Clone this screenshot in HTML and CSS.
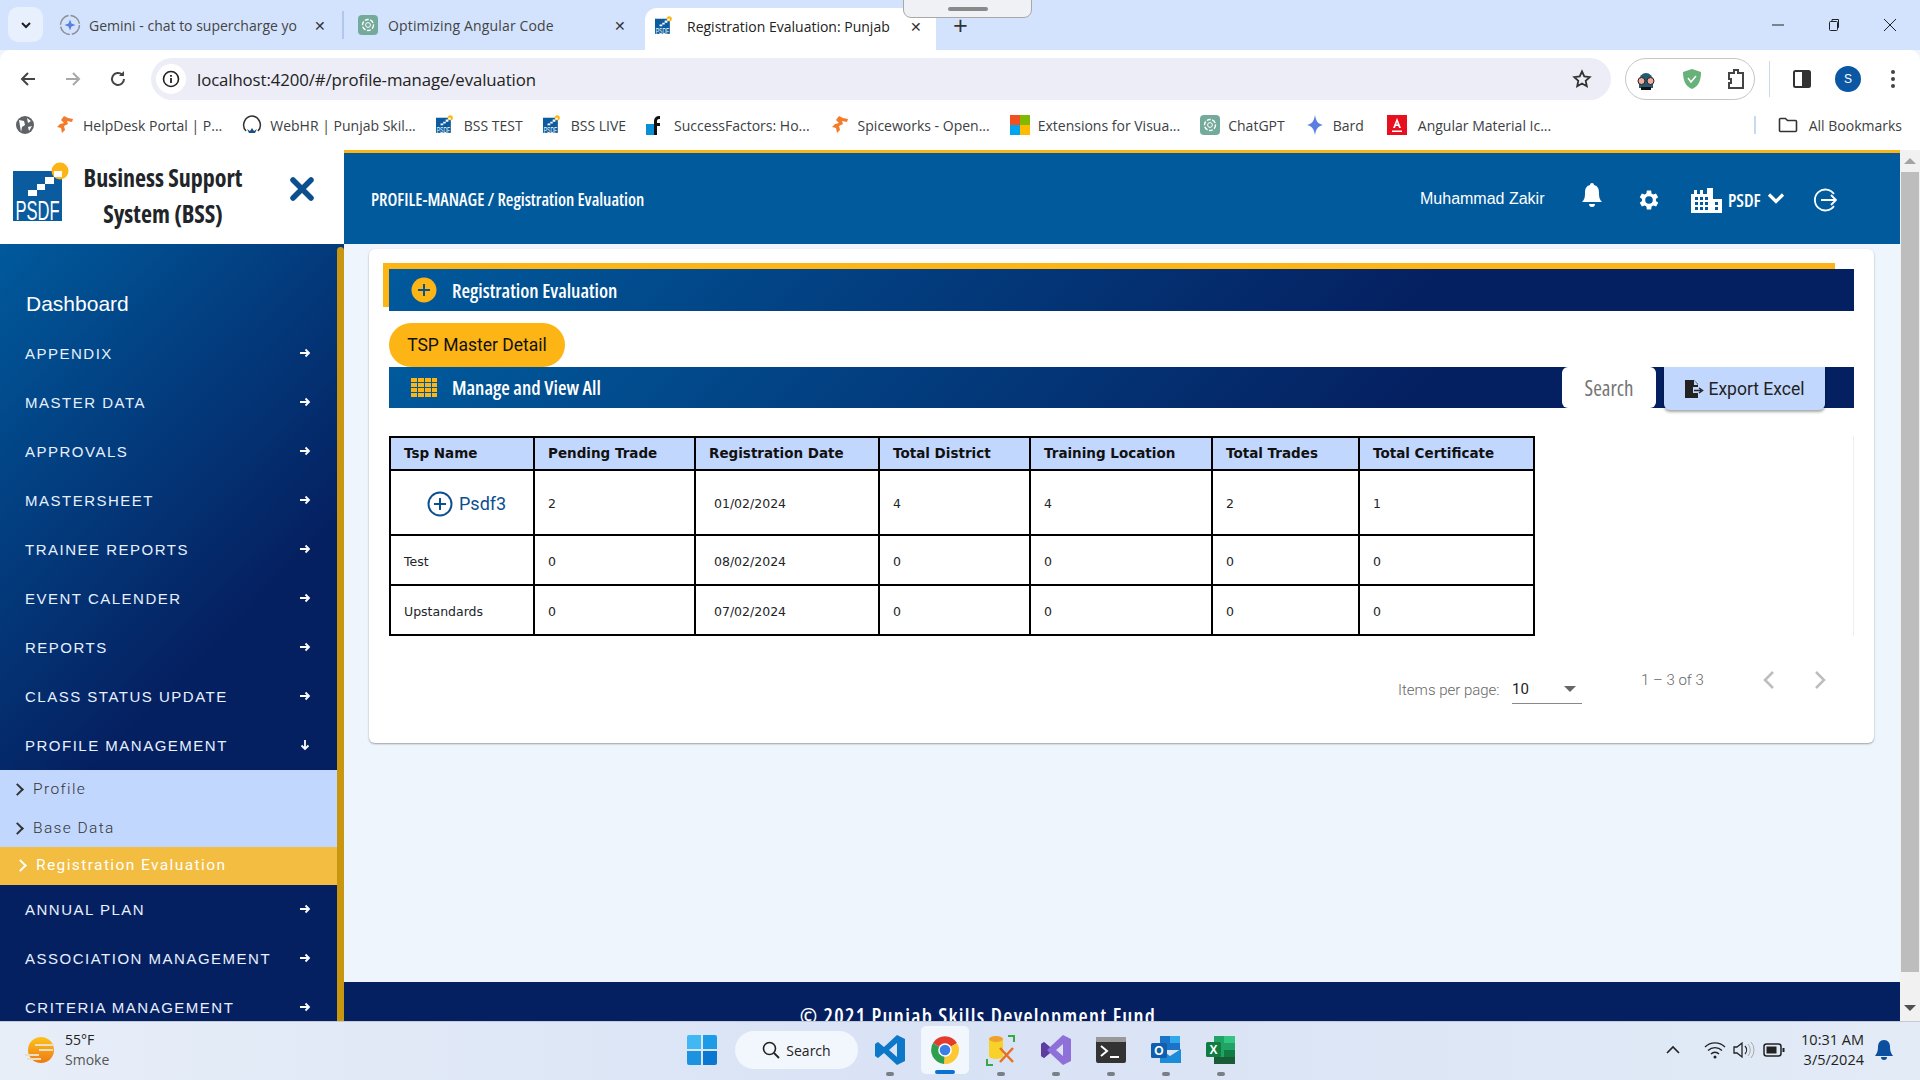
FILE: index.html
```html
<!DOCTYPE html>
<html lang="en">
<head>
    <meta charset="UTF-8">
    <title>Registration Evaluation: Punjab Skills Development Fund</title>
    <link rel="stylesheet" href="styles.css">
</head>
<body>
<svg class="defs" width="0" height="0">
    <symbol id="psdf" viewBox="0 0 66 66">
        <rect x="0" y="9" width="49" height="50" fill="#0b5c9e"/>
        <circle cx="47" cy="9" r="8.500" fill="#fdb515"/>
        <path d="M41 9h8v6h-8zM32 15h9v7h-9zM24 22h8v6h-8zM15 28h9v6h-9z" fill="#fff"/>
        <text x="24.500" y="58" text-anchor="middle" font-family="Liberation Sans, sans-serif" font-size="27" fill="#fff" textLength="44" lengthAdjust="spacingAndGlyphs">PSDF</text>
    </symbol>
    <symbol id="gpt" viewBox="0 0 20 20">
        <rect width="20" height="20" rx="4" fill="#74aa9c"/>
        <circle cx="10" cy="10" r="5.5" fill="none" stroke="#fff" stroke-width="1.4" stroke-dasharray="4 1.5"/>
        <circle cx="10" cy="10" r="2.4" fill="none" stroke="#fff" stroke-width="1"/>
    </symbol>
    <symbol id="gear" viewBox="0 0 26 24">
        <path fill="#fff" d="M19.4 13a7.500 7.500 0 0 0 0-2l2.100-1.600-2-3.500-2.500 1a7.500 7.500 0 0 0-1.700-1L15 3.200h-4l-.4 2.700a7.500 7.500 0 0 0-1.700 1l-2.500-1-2 3.500L6.500 11a7.500 7.500 0 0 0 0 2l-2.100 1.600 2 3.500 2.500-1a7.500 7.500 0 0 0 1.700 1l.4 2.700h4l.4-2.700a7.500 7.500 0 0 0 1.700-1l2.500 1 2-3.500zM13 15.500a3.500 3.500 0 1 1 0-7 3.500 3.500 0 0 1 0 7z"/>
    </symbol>
    <symbol id="arrow-r" viewBox="0 0 12 12">
        <path d="M1 6h9M6.500 2.500 10 6l-3.500 3.500" fill="none" stroke="#fff" stroke-width="1.800"/>
    </symbol>
    <symbol id="orange" viewBox="0 0 20 20">
        <path d="M9 1 6 5l3 3-4 1-3 3 4 1 1 5 3-3-1-4 4-2-1-3 5 1 1-3-5-1z" fill="#f47b2a"/>
    </symbol>
</svg>

<div class="tabbar">
    <div class="tab-menu">
        <svg width="12" height="12" viewBox="0 0 12 12"><path d="M2 4l4 4 4-4" fill="none" stroke="#1f1f1f" stroke-width="2"/></svg>
    </div>
    <div class="tab tab-first">
        <svg width="22" height="22" viewBox="0 0 22 22"><circle cx="11" cy="11" r="9.500" fill="none" stroke="#8a8f98" stroke-width="1.500" stroke-dasharray="13 2"/><path d="M11 5.500 12.500 9.500 16.500 11 12.500 12.500 11 16.500 9.500 12.500 5.500 11 9.500 9.500z" fill="#5b7fe0"/></svg>
        <span class="tab-text">Gemini - chat to supercharge yo</span>
        <span class="tab-x">✕</span>
    </div>
    <div class="tab tab-second">
        <svg width="20" height="20"><use href="#gpt"/></svg>
        <span class="tab-text">Optimizing Angular Code</span>
        <span class="tab-x">✕</span>
    </div>
    <div class="tab tab-active">
        <svg width="20" height="20"><use href="#psdf"/></svg>
        <span class="tab-text">Registration Evaluation: Punjab</span>
        <span class="tab-x">✕</span>
    </div>
    <span class="tab-plus">+</span>
    <div class="win-btns">
        <svg width="14" height="14" viewBox="0 0 14 14"><path d="M1 7h12" stroke="#222" stroke-width="1"/></svg>
        <svg width="14" height="14" viewBox="0 0 14 14"><rect x="2.500" y="3.500" width="8" height="9" rx="1" fill="none" stroke="#222"/><path d="M5 3V1.500h6.500v8H11" fill="none" stroke="#222"/></svg>
        <svg width="14" height="14" viewBox="0 0 14 14"><path d="M1 1l12 12M13 1 1 13" stroke="#222" stroke-width="1"/></svg>
    </div>
    <div class="tab-handle"><span></span></div>
</div>

<div class="toolbar">
    <div class="nav-btns">
        <svg width="18" height="18" viewBox="0 0 18 18"><path d="M16 9H3M9 3 3 9l6 6" fill="none" stroke="#444" stroke-width="2"/></svg>
        <svg width="18" height="18" viewBox="0 0 18 18"><path d="M2 9h13M9 3l6 6-6 6" fill="none" stroke="#a8a8a8" stroke-width="2"/></svg>
        <svg width="18" height="18" viewBox="0 0 18 18"><path d="M15 9a6 6 0 1 1-1.800-4.300" fill="none" stroke="#444" stroke-width="2"/><path d="M15 1v5h-5z" fill="#444"/></svg>
    </div>
    <div class="omnibox">
        <span class="site-info">
            <svg width="18" height="18" viewBox="0 0 18 18"><circle cx="9" cy="9" r="7.500" fill="none" stroke="#222" stroke-width="1.600"/><path d="M9 8v5M9 5v1.800" stroke="#222" stroke-width="1.800"/></svg>
        </span>
        <span class="url">localhost:4200/#/profile-manage/evaluation</span>
        <svg class="star" width="20" height="20" viewBox="0 0 20 20"><path d="M10 2.500l2.300 5 5.400.6-4 3.700 1.100 5.400L10 14.500l-4.800 2.700 1.100-5.400-4-3.700 5.400-.6z" fill="none" stroke="#333" stroke-width="1.800"/></svg>
    </div>
    <div class="ext-box">
        <svg width="24" height="24" viewBox="0 0 24 24"><path d="M5 14a7 8 0 0 1 14 0v7H5z" fill="#235a70"/><circle cx="7.500" cy="14" r="3.500" fill="#f1a9a0" stroke="#222"/><circle cx="16.500" cy="14" r="3.500" fill="#f1a9a0" stroke="#222"/><path d="M7 20h10v3H7z" fill="#111"/></svg>
        <svg width="24" height="24" viewBox="0 0 24 24"><path d="M12 2l9 3c0 8-2 14-9 17C5 19 3 13 3 5z" fill="#67b279"/><path d="M8 11l3 4 5-6" fill="none" stroke="#fff" stroke-width="1.500"/></svg>
        <svg width="22" height="24" viewBox="0 0 22 24"><path d="M4 6h5V3h4v3h5v15H4v-5h2v-4H4z" fill="none" stroke="#444" stroke-width="2"/></svg>
    </div>
    <span class="tool-sep"></span>
    <svg width="20" height="20" viewBox="0 0 20 20"><rect x="2" y="2" width="16" height="16" rx="1.500" fill="none" stroke="#333" stroke-width="2"/><rect x="10" y="2" width="8" height="16" fill="#333"/></svg>
    <span class="avatar">S</span>
    <svg width="6" height="20" viewBox="0 0 6 20"><circle cx="3" cy="3" r="2" fill="#444"/><circle cx="3" cy="10" r="2" fill="#444"/><circle cx="3" cy="17" r="2" fill="#444"/></svg>
</div>

<div class="bookmarks">
    <svg class="bm-globe" width="18" height="18" viewBox="0 0 18 18"><circle cx="9" cy="9" r="9" fill="#5f6368"/><path d="M3 4l5 1 1 4-3 2-1 5zM11 2l4 3-3 2zM12 11l4-1-3 5z" fill="#fff"/></svg>
    <a class="bm"><svg width="20" height="20"><use href="#orange"/></svg>HelpDesk Portal | P...</a>
    <a class="bm"><svg width="20" height="20" viewBox="0 0 20 20"><path d="M10 1a9 9 0 0 0-6 15" fill="none" stroke="#333" stroke-width="1.500"/><path d="M10 1a9 9 0 0 1 6 15" fill="none" stroke="#333" stroke-width="1.500"/><path d="M5 14l2 4h6l2-4-3 2-2-3-2 3z" fill="#1c4f7c"/></svg>WebHR | Punjab Skil...</a>
    <a class="bm"><svg width="20" height="20"><use href="#psdf"/></svg>BSS TEST</a>
    <a class="bm"><svg width="20" height="20"><use href="#psdf"/></svg>BSS LIVE</a>
    <a class="bm"><svg width="20" height="20" viewBox="0 0 20 20"><path d="M0 9h9v11H0z" fill="#0a8fd6"/><path d="M8 20V6a5 5 0 0 1 6-5v3c-2 0-3 .5-3 2v2h3v3h-3v9z" fill="#111"/></svg>SuccessFactors: Ho...</a>
    <a class="bm"><svg width="20" height="20"><use href="#orange"/></svg>Spiceworks - Open...</a>
    <a class="bm"><svg width="20" height="20" viewBox="0 0 20 20"><path d="M0 0h10v10H0z" fill="#f25022"/><path d="M10 0h10v10H10z" fill="#7fba00"/><path d="M0 10h10v10H0z" fill="#00a4ef"/><path d="M10 10h10v10H10z" fill="#ffb900"/></svg>Extensions for Visua...</a>
    <a class="bm"><svg width="20" height="20"><use href="#gpt"/></svg>ChatGPT</a>
    <a class="bm"><svg width="20" height="20" viewBox="0 0 20 20"><path d="M10 0c1 6 3 9 8 10-5 1-7 4-8 10-1-6-3-9-8-10 5-1 7-4 8-10z" fill="#5b7fe0"/></svg>Bard</a>
    <a class="bm bm-angular"><svg width="20" height="20" viewBox="0 0 20 20"><rect width="20" height="20" fill="#e8101f"/><path d="M10 3 6 13h2l.7-2h2.600l.7 2h2zM9.300 9.500 10 7l.7 2.500zM5 15.500h10V17H5z" fill="#fff"/></svg>Angular Material Ic...</a>
    <span class="bm-sep"></span>
    <a class="bm bm-all"><svg width="20" height="20" viewBox="0 0 20 20"><path d="M1.500 4.500a1 1 0 0 1 1-1h5l2 2h8a1 1 0 0 1 1 1v9a1 1 0 0 1-1 1h-15a1 1 0 0 1-1-1z" fill="none" stroke="#333" stroke-width="1.600"/></svg>All Bookmarks</a>
</div>

<div class="app">
    <aside class="sidebar">
        <div class="brand">
            <svg class="brand-logo" width="66" height="66"><use href="#psdf"/></svg>
            <div class="brand-name">Business Support<br>System (BSS)</div>
            <svg class="brand-close" width="24" height="24" viewBox="0 0 24 24"><path d="M3 3l18 18M21 3 3 21" stroke="#0b4f8f" stroke-width="5.500" stroke-linecap="round"/></svg>
        </div>
        <div class="nav-wrap">
            <nav class="sidenav">
                <div class="nav-dash">Dashboard</div>
                <a class="nav-item">APPENDIX<svg width="12" height="12"><use href="#arrow-r"/></svg></a>
                <a class="nav-item">MASTER DATA<svg width="12" height="12"><use href="#arrow-r"/></svg></a>
                <a class="nav-item">APPROVALS<svg width="12" height="12"><use href="#arrow-r"/></svg></a>
                <a class="nav-item">MASTERSHEET<svg width="12" height="12"><use href="#arrow-r"/></svg></a>
                <a class="nav-item">TRAINEE REPORTS<svg width="12" height="12"><use href="#arrow-r"/></svg></a>
                <a class="nav-item">EVENT CALENDER<svg width="12" height="12"><use href="#arrow-r"/></svg></a>
                <a class="nav-item">REPORTS<svg width="12" height="12"><use href="#arrow-r"/></svg></a>
                <a class="nav-item">CLASS STATUS UPDATE<svg width="12" height="12"><use href="#arrow-r"/></svg></a>
                <a class="nav-item">PROFILE MANAGEMENT<svg width="12" height="12" viewBox="0 0 12 12"><path d="M6 1v9M2.500 6.500 6 10l3.500-3.500" fill="none" stroke="#fff" stroke-width="1.800"/></svg></a>
                <div class="subnav">
                    <a class="sub-item">Profile</a>
                    <a class="sub-item">Base Data</a>
                </div>
                <a class="sub-active">Registration Evaluation</a>
                <a class="nav-item">ANNUAL PLAN<svg width="12" height="12"><use href="#arrow-r"/></svg></a>
                <a class="nav-item">ASSOCIATION MANAGEMENT<svg width="12" height="12"><use href="#arrow-r"/></svg></a>
                <a class="nav-item">CRITERIA MANAGEMENT<svg width="12" height="12"><use href="#arrow-r"/></svg></a>
            </nav>
            <div class="nav-thumb"></div>
        </div>
    </aside>

    <main class="main">
        <header class="topbar">
            <div class="crumb">PROFILE-MANAGE / Registration Evaluation</div>
            <div class="user">Muhammad Zakir</div>
            <svg class="ic-bell" width="22" height="26" viewBox="0 0 22 26"><path d="M11 1a2 2 0 0 1 2 2c4 1 5 4 5 8 0 5 1 7 3 9H1c2-2 3-4 3-9 0-4 1-7 5-8a2 2 0 0 1 2-2zM8 22h6a3 3 0 0 1-6 0z" fill="#fff"/></svg>
            <svg class="ic-gear" width="28" height="26"><use href="#gear"/></svg>
            <svg class="ic-org" width="32" height="26" viewBox="0 0 32 26"><path fill="#fff" fill-rule="evenodd" d="M0 26V7h3V3h3v4h3V3h3v4h4V1h6v11h9v14zM4 10v3h3v-3zm5 0v3h3v-3zm5 0v3h3v-3zM4 15v3h3v-3zm5 0v3h3v-3zm5 0v3h3v-3zM4 20v3h3v-3zm5 0v3h3v-3zm5 0v3h3v-3zm10-5v3h3v-3zm0 5v3h3v-3z"/></svg>
            <span class="org">PSDF</span>
            <svg class="ic-chev" width="18" height="12" viewBox="0 0 18 12"><path d="M2 2.500l7 7 7-7" fill="none" stroke="#fff" stroke-width="3.200"/></svg>
            <svg class="ic-out" width="24" height="24" viewBox="0 0 24 24"><path d="M21 6a10.500 10.500 0 1 0 0 12" fill="none" stroke="#fff" stroke-width="1.800"/><path d="M8 12h15M18 7l5 5-5 5" fill="none" stroke="#fff" stroke-width="1.800"/></svg>
        </header>

        <div class="content">
            <section class="card">
                <div class="panel panel-main">
                    <svg width="26" height="26" viewBox="0 0 26 26"><circle cx="13" cy="13" r="12.500" fill="#fdb515"/><path d="M13 7v12M7 13h12" stroke="#0b4f8f" stroke-width="2"/></svg>
                    <span class="panel-title">Registration Evaluation</span>
                </div>
                <button class="btn-tsp">TSP Master Detail</button>
                <div class="panel panel-list">
                    <svg width="26" height="19" viewBox="0 0 26 19"><path fill="#fdb515" d="M0 0h6v4H0zM7 0h6v4H7zM14 0h6v4h-6zM21 0h5v4h-5zM0 5h6v4H0zM7 5h6v4H7zM14 5h6v4h-6zM21 5h5v4h-5zM0 10h6v4H0zM7 10h6v4H7zM14 10h6v4h-6zM21 10h5v4h-5zM0 15h6v4H0zM7 15h6v4H7zM14 15h6v4h-6zM21 15h5v4h-5z"/></svg>
                    <span class="panel-title">Manage and View All</span>
                    <div class="search-box">Search</div>
                    <button class="btn-export">
                        <svg width="20" height="20" viewBox="0 0 20 20"><path d="M1 1h9l4 4v3H9v6h5v5H1z" fill="#222"/><path d="M10 1v5h4z" fill="#c2d7fe"/><path d="M9 10.500h7M14 8l3.500 2.500L14 13" fill="none" stroke="#222" stroke-width="1.500" transform="translate(1 1)"/></svg>
                        Export Excel
                    </button>
                </div>

                <div class="table-wrap">
                    <table class="grid">
                        <colgroup>
                            <col class="c1"><col class="c2"><col class="c3"><col class="c4"><col class="c5"><col class="c6"><col class="c7">
                        </colgroup>
                        <thead>
                            <tr>
                                <th>Tsp Name</th><th>Pending Trade</th><th>Registration Date</th><th>Total District</th><th>Training Location</th><th>Total Trades</th><th>Total Certificate</th>
                            </tr>
                        </thead>
                        <tbody>
                            <tr class="row-open">
                                <td>
                                    <span class="tsp-open">
                                        <svg width="26" height="26" viewBox="0 0 26 26"><circle cx="13" cy="13" r="11.500" fill="none" stroke="#0b4f8f" stroke-width="2"/><path d="M13 7v12M7 13h12" stroke="#0b4f8f" stroke-width="2"/></svg>
                                        Psdf3
                                    </span>
                                </td>
                                <td>2</td><td class="date">01/02/2024</td><td>4</td><td>4</td><td>2</td><td>1</td>
                            </tr>
                            <tr class="row-a">
                                <td>Test</td><td>0</td><td class="date">08/02/2024</td><td>0</td><td>0</td><td>0</td><td>0</td>
                            </tr>
                            <tr class="row-b">
                                <td>Upstandards</td><td>0</td><td class="date">07/02/2024</td><td>0</td><td>0</td><td>0</td><td>0</td>
                            </tr>
                        </tbody>
                    </table>
                </div>

                <div class="pager">
                    <span class="pager-label">Items per page:</span>
                    <span class="pager-select">10<i class="caret"></i></span>
                    <span class="pager-range">1 – 3 of 3</span>
                    <svg class="pager-prev" width="14" height="20" viewBox="0 0 14 20"><path d="M11 2 3 10l8 8" fill="none" stroke="#bdbdbd" stroke-width="2.500"/></svg>
                    <svg class="pager-next" width="14" height="20" viewBox="0 0 14 20"><path d="M3 2l8 8-8 8" fill="none" stroke="#bdbdbd" stroke-width="2.500"/></svg>
                </div>
            </section>
        </div>

        <footer class="footer">© 2021 Punjab Skills Development Fund</footer>
    </main>

    <div class="vscroll">
        <i class="vs-up"></i>
        <div class="vs-thumb"></div>
        <i class="vs-down"></i>
    </div>
</div>

<div class="taskbar">
    <div class="weather">
        <svg width="30" height="28" viewBox="0 0 30 28"><defs><linearGradient id="sun" x1="0" y1="0" x2="0" y2="1"><stop offset="0" stop-color="#fdc21a"/><stop offset="1" stop-color="#ee7a12"/></linearGradient></defs><circle cx="16" cy="14" r="13" fill="url(#sun)"/><path d="M0 19h14M2 23h14M10 9h19M14 14h14" stroke="#eadfc4" stroke-width="2"/></svg>
        <div class="weather-text"><div class="temp">55°F</div><div class="cond">Smoke</div></div>
    </div>
    <div class="task-center">
        <svg class="ti-start" width="30" height="30" viewBox="0 0 30 30"><path d="M0 2a2 2 0 0 1 2-2h12v14H0z" fill="#40b8f4"/><path d="M16 0h12a2 2 0 0 1 2 2v12H16z" fill="#1d9be6"/><path d="M0 16h14v14H2a2 2 0 0 1-2-2z" fill="#1b93e0"/><path d="M16 16h14v12a2 2 0 0 1-2 2H16z" fill="#0a78d0"/></svg>
        <div class="task-search">
            <svg width="18" height="18" viewBox="0 0 18 18"><circle cx="7.500" cy="7.500" r="6" fill="none" stroke="#222" stroke-width="1.600"/><path d="M12 12l5 5" stroke="#222" stroke-width="1.800"/></svg>
            Search
        </div>
        <div class="task-app">
            <svg width="30" height="30" viewBox="0 0 30 30"><path d="M22 0l8 4v22l-8 4-13-12-6 5-3-2V9l3-2 6 5zM22 8l-8 7 8 7z" fill="#0e78c8"/></svg>
            <i class="run-dot"></i>
        </div>
        <div class="task-app task-on">
            <svg width="30" height="30" viewBox="0 0 30 30"><path d="M15 15 3 8a14 14 0 0 1 24 0z" fill="#e33b2e"/><path d="M15 15l12-7a14 14 0 0 1-13 21z" fill="#fcc934"/><path d="M15 15l-1 14A14 14 0 0 1 3 8z" fill="#2f9e4f"/><circle cx="15" cy="15" r="6.800" fill="#fff"/><circle cx="15" cy="15" r="5.300" fill="#3b7ee8"/></svg>
            <i class="run-bar"></i>
        </div>
        <div class="task-app">
            <svg width="30" height="32" viewBox="0 0 30 32"><path d="M3 5a7 3 0 0 1 14 0v17a7 3 0 0 1-14 0z" fill="#f8d22b"/><path d="M3 5a7 3 0 0 0 14 0 7 3 0 0 0-14 0z" fill="#f0a030"/><path d="M14 28 27 14M27 28 14 14" stroke="#e8701e" stroke-width="2.500"/><path d="M22 2h6v6M1 25v6h6" fill="none" stroke="#3ba848" stroke-width="2"/></svg>
            <i class="run-dot"></i>
        </div>
        <div class="task-app">
            <svg width="30" height="30" viewBox="0 0 30 30"><path d="M22 0l8 4v22l-8 4-13-12-6 5-3-2V9l3-2 6 5zM22 9l-7 6 7 6z" fill="#8f6fd8"/><path d="M0 9l3-2 6 5-3 3 3 3-6 5-3-2z" fill="#5c3ea0"/></svg>
            <i class="run-dot"></i>
        </div>
        <div class="task-app">
            <svg width="30" height="26" viewBox="0 0 30 26"><rect width="30" height="26" rx="2" fill="#333"/><rect width="30" height="5" rx="1" fill="#999"/><path d="M5 9l6 5-6 5" fill="none" stroke="#fff" stroke-width="2"/><path d="M14 20h9" stroke="#fff" stroke-width="2"/></svg>
            <i class="run-dot"></i>
        </div>
        <div class="task-app">
            <svg width="30" height="30" viewBox="0 0 30 30"><path d="M9 1h20v14H9z" fill="#1c74c8"/><path d="M19 1h10v7H19z" fill="#32a8ec"/><path d="M9 14l10 7 11-7v14H9z" fill="#1a8cd8"/><rect y="8" width="16" height="15" rx="1.500" fill="#0f5fae"/><text x="8" y="20" text-anchor="middle" font-family="Liberation Sans, sans-serif" font-weight="700" font-size="12" fill="#fff">O</text></svg>
            <i class="run-dot"></i>
        </div>
        <div class="task-app">
            <svg width="30" height="30" viewBox="0 0 30 30"><path d="M8 1h21v28H8z" fill="#21a366"/><path d="M18 1h11v7H18z" fill="#33c481"/><path d="M18 15h11v7H18z" fill="#107c41"/><path d="M8 22h21v7H8z" fill="#185c37"/><rect y="7" width="15" height="15" rx="1.500" fill="#107c41"/><text x="7.500" y="19" text-anchor="middle" font-family="Liberation Sans, sans-serif" font-weight="700" font-size="12" fill="#fff">X</text></svg>
            <i class="run-dot"></i>
        </div>
    </div>
    <div class="tray">
        <svg class="tr-caret" width="14" height="10" viewBox="0 0 14 10"><path d="M1 8l6-6 6 6" fill="none" stroke="#222" stroke-width="1.600"/></svg>
        <svg class="tr-wifi" width="22" height="18" viewBox="0 0 22 18"><path d="M1 6a14 14 0 0 1 20 0M4 9.500a10 10 0 0 1 14 0M7 13a5.500 5.500 0 0 1 8 0" fill="none" stroke="#222" stroke-width="1.300"/><circle cx="11" cy="16" r="1.500" fill="#222"/></svg>
        <svg class="tr-vol" width="22" height="18" viewBox="0 0 22 18"><path d="M1 6h3l5-4v14l-5-4H1z" fill="none" stroke="#222" stroke-width="1.300"/><path d="M12 5a6 6 0 0 1 0 8" fill="none" stroke="#222" stroke-width="1.200"/><path d="M15 3a9 9 0 0 1 0 12M18 1a12 12 0 0 1 0 16" fill="none" stroke="#aaa" stroke-width="1"/></svg>
        <svg class="tr-bat" width="22" height="14" viewBox="0 0 22 14"><rect x="1" y="1" width="17" height="12" rx="2.500" fill="none" stroke="#222" stroke-width="1.500"/><rect x="3.500" y="3.500" width="10" height="7" fill="#222"/><path d="M19.500 5h2v4h-2z" fill="#222"/></svg>
        <div class="clock"><div>10:31 AM</div><div>3/5/2024</div></div>
        <svg class="tr-bell" width="18" height="20" viewBox="0 0 18 20"><path d="M9 0c4 0 6 3 6 7 0 4 1 6 3 9H0c2-3 3-5 3-9 0-4 2-7 6-7zM6 17h6a3 3 0 0 1-6 0z" fill="#0b4f9e"/></svg>
    </div>
</div>
</body>
</html>
```

FILE: styles.css
```css
html, body {
    margin: 0;
    padding: 0;
    width: 1920px;
    height: 1080px;
    overflow: hidden;
    font-family: "Liberation Sans", Arial, sans-serif;
    background-color: #eef5fd;
}

.defs {
    position: absolute;
}

a {
    color: inherit;
    text-decoration: none;
}

button {
    border: none;
    font-family: inherit;
}

/* browser chrome */
.tabbar {
    position: relative;
    height: 50px;
    background-color: #d3e3fd;
    display: flex;
    align-items: flex-end;
    font-family: "Open Sans", sans-serif;
    font-size: 14px;
    color: #444;
}

.tab-menu {
    width: 35px;
    height: 35px;
    margin: 0 0 8px 8px;
    background-color: #e8effd;
    border-radius: 10px;
    display: flex;
    align-items: center;
    justify-content: center;
}

.tab {
    height: 42px;
    display: flex;
    align-items: center;
    box-sizing: border-box;
}

.tab-text {
    overflow: hidden;
    white-space: nowrap;
}

.tab-x {
    font-size: 14px;
    color: #333;
}

.tab-first {
    width: 301px;
    padding-left: 16px;
    border-right: 2px solid #b0c8ee;
    height: 28px;
    margin-bottom: 11px;
}

.tab-first .tab-text {
    width: 210px;
    margin-left: 8px;
    margin-right: 15px;
}

.tab-second {
    width: 301px;
    padding-left: 14px;
    height: 28px;
    margin-bottom: 11px;
}

.tab-second .tab-text {
    width: 212px;
    margin-left: 10px;
    margin-right: 14px;
    letter-spacing: 0.15px;
}

.tab-active {
    width: 291px;
    padding-left: 10px;
    background-color: #fff;
    border-radius: 12px 12px 0 0;
    color: #222;
    padding-bottom: 6px;
}

.tab-active .tab-text {
    width: 205px;
    margin-left: 12px;
    margin-right: 18px;
}

.tab-plus {
    margin: 0 0 10px 17px;
    font-size: 26px;
    line-height: 30px;
    color: #333;
}

.win-btns {
    margin-left: auto;
    margin-bottom: 18px;
    margin-right: 23px;
    display: flex;
    gap: 42px;
}

.tab-handle {
    position: absolute;
    left: 903px;
    top: -1px;
    width: 129px;
    height: 19px;
    box-sizing: border-box;
    background-color: #f0f1f4;
    border: 1px solid #a8a8a8;
    border-radius: 0 0 8px 8px;
}

.tab-handle span {
    display: block;
    width: 40px;
    height: 4px;
    margin: 7px auto 0;
    border-radius: 2px;
    background-color: #8a8a8a;
}

.toolbar {
    height: 50px;
    box-sizing: border-box;
    background-color: #fff;
    display: flex;
    align-items: center;
    padding-top: 8px;
    border-radius: 10px 10px 0 0;
}

.nav-btns {
    width: 151px;
    display: flex;
    gap: 27px;
    padding-left: 19px;
    box-sizing: border-box;
}

.omnibox {
    width: 1460px;
    height: 42px;
    background-color: #ecedf7;
    border-radius: 21px;
    display: flex;
    align-items: center;
    box-sizing: border-box;
    padding-left: 5px;
}

.site-info {
    width: 30px;
    height: 30px;
    background-color: #fff;
    border-radius: 50%;
    display: flex;
    align-items: center;
    justify-content: center;
}

.url {
    margin-left: 11px;
    font-family: "Open Sans", sans-serif;
    font-size: 16.8px;
    letter-spacing: -0.1px;
    color: #222;
}

.star {
    margin-left: auto;
    margin-right: 19px;
}

.ext-box {
    width: 130px;
    height: 42px;
    box-sizing: border-box;
    margin-left: 14px;
    border: 1px solid #c4c7c5;
    border-radius: 21px;
    display: flex;
    align-items: center;
    justify-content: space-between;
    padding: 0 7px 0 8px;
}

.tool-sep {
    width: 1px;
    height: 36px;
    margin: 0 22px 0 14px;
    background-color: #c9d9f2;
}

.avatar {
    width: 26px;
    height: 26px;
    margin: 0 29px 0 23px;
    border-radius: 50%;
    background-color: #0b57a4;
    color: #fff;
    font-size: 12px;
    display: flex;
    align-items: center;
    justify-content: center;
}

.bookmarks {
    height: 50px;
    background-color: #fff;
    display: flex;
    align-items: center;
    padding-left: 16px;
    font-family: "Open Sans", sans-serif;
    font-size: 14px;
    color: #3c4043;
    box-sizing: border-box;
}

.bm {
    display: flex;
    align-items: center;
    gap: 8px;
    margin-right: 20px;
    white-space: nowrap;
}

.bm-globe {
    margin-right: 21px;
}

.bm-angular {
    margin-left: 3px;
    margin-right: 0;
    gap: 11px;
}

.bm-sep {
    width: 2px;
    height: 18px;
    margin-left: auto;
    margin-right: 22px;
    background-color: #c9d9f2;
}

.bm-all {
    margin-right: 18px;
    gap: 11px;
}

/* app frame */
.app {
    height: 871px;
    display: flex;
    overflow: hidden;
}

.sidebar {
    width: 344px;
    flex-shrink: 0;
    display: flex;
    flex-direction: column;
    background-color: #fff;
    border-top: 2px solid #fff;
    box-sizing: border-box;
}

.brand {
    height: 92px;
    flex-shrink: 0;
    display: flex;
    align-items: flex-start;
    background-color: #fff;
}

.brand-logo {
    margin: 10px 0 0 13px;
    flex-shrink: 0;
}

.brand-name {
    width: 212px;
    flex-shrink: 0;
    margin: 8px 0 0 -22px;
    text-align: center;
    font-family: "Open Sans", sans-serif;
    font-stretch: 75%;
    font-weight: 700;
    font-size: 24px;
    line-height: 36px;
    color: #212529;
    white-space: nowrap;
}

.brand-close {
    margin: 25px 0 0 21px;
    flex-shrink: 0;
}

.nav-wrap {
    flex: 1;
    display: flex;
    overflow: hidden;
    background: linear-gradient(135deg, #005a9c 0%, #052061 55%);
}

.sidenav {
    width: 337px;
    color: #e8f1ff;
}

.nav-thumb {
    width: 7px;
    margin-top: 3px;
    background-color: #c8960f;
    border-radius: 4px 4px 0 0;
}

.nav-dash {
    height: 85px;
    padding: 48px 0 0 26px;
    box-sizing: border-box;
    font-size: 21px;
    color: #fff;
}

.nav-item {
    height: 49px;
    box-sizing: border-box;
    padding: 0 26px 1px 25px;
    display: flex;
    align-items: center;
    justify-content: space-between;
    font-size: 15px;
    letter-spacing: 1.5px;
    white-space: nowrap;
}

.subnav {
    height: 77px;
    background-color: #c2d7fe;
    box-sizing: border-box;
}

.sub-item {
    display: block;
    height: 39px;
    line-height: 38px;
    padding-left: 33px;
    position: relative;
    font-family: Roboto, sans-serif;
    font-weight: 300;
    font-size: 15.5px;
    letter-spacing: 1.4px;
    color: #333;
}

.sub-item::before,
.sub-active::before {
    content: "";
    position: absolute;
    left: 13px;
    top: 15px;
    width: 7px;
    height: 7px;
    border-top: 2px solid #333;
    border-right: 2px solid #333;
    transform: rotate(45deg);
}

.sub-active {
    display: block;
    position: relative;
    height: 38px;
    line-height: 37px;
    padding-left: 36px;
    background-color: #f2bd40;
    color: #fff;
    font-family: Roboto, sans-serif;
    font-size: 15.5px;
    letter-spacing: 1.4px;
}

.sub-active::before {
    left: 16px;
    top: 14px;
    border-color: #fff;
}

/* main column */
.main {
    width: 1556px;
    display: flex;
    flex-direction: column;
}

.topbar {
    height: 94px;
    flex-shrink: 0;
    box-sizing: border-box;
    border-top: 3px solid #fdb515;
    background-color: #005a9c;
    display: flex;
    align-items: center;
    padding: 2px 0 0 27px;
    color: #fff;
}

.crumb {
    width: 1049px;
    font-family: "Open Sans", sans-serif;
    font-stretch: 75%;
    font-weight: 600;
    font-size: 17.4px;
    margin-bottom: 1px;
}

.user {
    width: 161px;
    font-size: 16px;
    margin-bottom: 2px;
}

.ic-bell {
    margin-bottom: 9px;
}

.ic-gear {
    margin-left: 32px;
}

.ic-org {
    margin-left: 28px;
}

.org {
    margin-left: 5px;
    font-family: "Open Sans", sans-serif;
    font-stretch: 75%;
    font-weight: 600;
    font-size: 18px;
}

.ic-chev {
    margin: 0 0 3px 6px;
}

.ic-out {
    margin-left: 28px;
}

.content {
    flex: 1;
    padding: 5px 26px 0 25px;
    overflow: hidden;
}

.card {
    position: relative;
    z-index: 0;
    height: 494px;
    box-sizing: border-box;
    padding: 20px 20px 0;
    background-color: #fff;
    border-radius: 6px;
    box-shadow: 0 1px 2px rgba(0, 0, 0, 0.35);
}

.panel {
    display: flex;
    align-items: center;
    background: linear-gradient(135deg, #005a9c 0%, #052061 70%);
    color: #fff;
    padding-left: 22px;
    box-sizing: border-box;
}

.panel-title {
    margin-left: 15px;
    font-family: "Open Sans", sans-serif;
    font-stretch: 75%;
    font-weight: 600;
    font-size: 19.6px;
}

.panel-main {
    position: relative;
    height: 42px;
}

.panel-main::before {
    content: "";
    position: absolute;
    left: -6px;
    top: -6px;
    right: 19px;
    height: 44px;
    background-color: #fdb515;
    border-radius: 0 0 4px 0;
    z-index: -1;
}

.btn-tsp {
    display: block;
    width: 176px;
    height: 44px;
    margin-top: 12px;
    background-color: #fdb515;
    border-radius: 22px;
    font-family: Roboto, sans-serif;
    font-size: 17.5px;
    color: #111;
}

.panel-list {
    height: 41px;
}

.search-box {
    width: 94px;
    height: 41px;
    margin-left: auto;
    background-color: #fff;
    border-radius: 6px;
    color: #757575;
    font-family: "Open Sans", sans-serif;
    font-stretch: 75%;
    font-size: 21px;
    display: flex;
    align-items: center;
    justify-content: center;
}

.btn-export {
    width: 161px;
    height: 43px;
    margin: 2px 29px 0 8px;
    background-color: #c2d7fe;
    border-radius: 0 0 6px 6px;
    box-shadow: 0 2px 3px rgba(0, 0, 0, 0.35);
    font-family: Roboto, sans-serif;
    font-size: 17.5px;
    color: #222;
    display: flex;
    align-items: center;
    justify-content: center;
    gap: 4px;
}

.table-wrap {
    margin-top: 28px;
    border-right: 1px solid #eee;
    height: 200px;
}

.grid {
    width: 1144px;
    table-layout: fixed;
    border-collapse: collapse;
    font-family: "DejaVu Sans", sans-serif;
    font-size: 12.5px;
    color: #212529;
}

.c1 { width: 144px; }
.c2 { width: 161px; }
.c3 { width: 184px; }
.c4 { width: 151px; }
.c5 { width: 182px; }
.c6 { width: 147px; }
.c7 { width: 175px; }

.grid th,
.grid td {
    border: 2px solid #000;
    padding: 0 13px;
    text-align: left;
}

.grid th {
    height: 29px;
    padding-bottom: 2px;
    background-color: #c2d7fe;
    font-size: 13.5px;
    color: #111;
}

.grid td {
    padding-top: 2px;
}

.grid .date {
    padding-left: 18px;
}

.row-open td {
    height: 61px;
}

.row-a td {
    height: 46px;
}

.row-b td {
    height: 46px;
}

.tsp-open {
    display: flex;
    align-items: center;
    gap: 6px;
    padding-left: 23px;
    font-family: Roboto, sans-serif;
    font-size: 18px;
    color: #0b4f8f;
}

.pager {
    position: relative;
    height: 87px;
    font-family: Roboto, sans-serif;
    font-weight: 300;
    font-size: 15px;
    color: #666;
}

.pager-label {
    position: absolute;
    left: 1009px;
    top: 45px;
}

.pager-select {
    position: absolute;
    left: 1123px;
    top: 44px;
    width: 70px;
    height: 23px;
    border-bottom: 1px solid #888;
    color: #222;
    font-weight: 400;
    font-size: 15px;
}

.caret {
    position: absolute;
    right: 6px;
    top: 6px;
    border-left: 6px solid transparent;
    border-right: 6px solid transparent;
    border-top: 6px solid #666;
}

.pager-range {
    position: absolute;
    left: 1252px;
    top: 35px;
}

.pager-prev {
    position: absolute;
    left: 1373px;
    top: 34px;
}

.pager-next {
    position: absolute;
    left: 1424px;
    top: 34px;
}

.footer {
    height: 39px;
    flex-shrink: 0;
    overflow: hidden;
    box-sizing: border-box;
    padding-top: 21px;
    padding-right: 288px;
    background-color: #052061;
    color: #fff;
    text-align: center;
    font-family: "Open Sans", sans-serif;
    font-stretch: 75%;
    font-weight: 600;
    font-size: 21px;
    letter-spacing: 1.3px;
    line-height: 26px;
}

.vscroll {
    width: 20px;
    background-color: #f1f1f1;
    display: flex;
    flex-direction: column;
    align-items: center;
}

.vs-up {
    margin: 8px 0;
    border-left: 6px solid transparent;
    border-right: 6px solid transparent;
    border-bottom: 6px solid #a3a3a3;
}

.vs-thumb {
    width: 18px;
    height: 800px;
    background-color: #bdbdbd;
}

.vs-down {
    margin-top: 33px;
    border-left: 6px solid transparent;
    border-right: 6px solid transparent;
    border-top: 6px solid #505050;
}

/* windows taskbar */
.taskbar {
    position: relative;
    height: 59px;
    box-sizing: border-box;
    border-top: 1px solid #c3cad4;
    padding-bottom: 2px;
    background: linear-gradient(90deg, #e7eef8 0%, #d8e2f5 50%, #e2ebf6 100%);
    display: flex;
    align-items: center;
}

.weather {
    width: 687px;
    display: flex;
    align-items: center;
    padding-left: 25px;
    box-sizing: border-box;
    gap: 10px;
    font-family: "Open Sans", sans-serif;
    font-size: 14px;
}

.temp {
    color: #222;
    line-height: 20px;
}

.cond {
    color: #555;
    line-height: 20px;
}

.task-center {
    display: flex;
    align-items: center;
    width: 565px;
    height: 100%;
}

.ti-start {
    flex-shrink: 0;
}

.task-search {
    width: 123px;
    height: 38px;
    margin: 0 4px 0 18px;
    background-color: #f2f6fd;
    border-radius: 19px;
    display: flex;
    align-items: center;
    justify-content: center;
    gap: 6px;
    font-family: "Open Sans", sans-serif;
    font-size: 14px;
    color: #222;
}

.task-app {
    position: relative;
    width: 55px;
    height: 48px;
    display: flex;
    align-items: center;
    justify-content: center;
}

.task-on {
    background-color: #f2f6fd;
    border-radius: 5px;
    width: 48px;
    margin: 0 4px;
}

.run-dot {
    position: absolute;
    bottom: -2px;
    left: 50%;
    width: 8px;
    height: 4px;
    margin-left: -4px;
    border-radius: 2px;
    background-color: #7a7f87;
}

.run-bar {
    position: absolute;
    bottom: 0;
    left: 14px;
    width: 20px;
    height: 4px;
    border-radius: 2px;
    background-color: #0b72d0;
}

.tray {
    margin-left: auto;
    display: flex;
    align-items: center;
    padding-right: 27px;
}

.tr-caret {
    margin-right: 24px;
}

.tr-wifi {
    margin-right: 7px;
}

.tr-vol {
    margin-right: 8px;
}

.tr-bat {
    margin-right: 16px;
}

.clock {
    font-family: "Open Sans", sans-serif;
    font-size: 14.5px;
    line-height: 20px;
    text-align: right;
    color: #222;
}

.tr-bell {
    margin-left: 11px;
}
```
